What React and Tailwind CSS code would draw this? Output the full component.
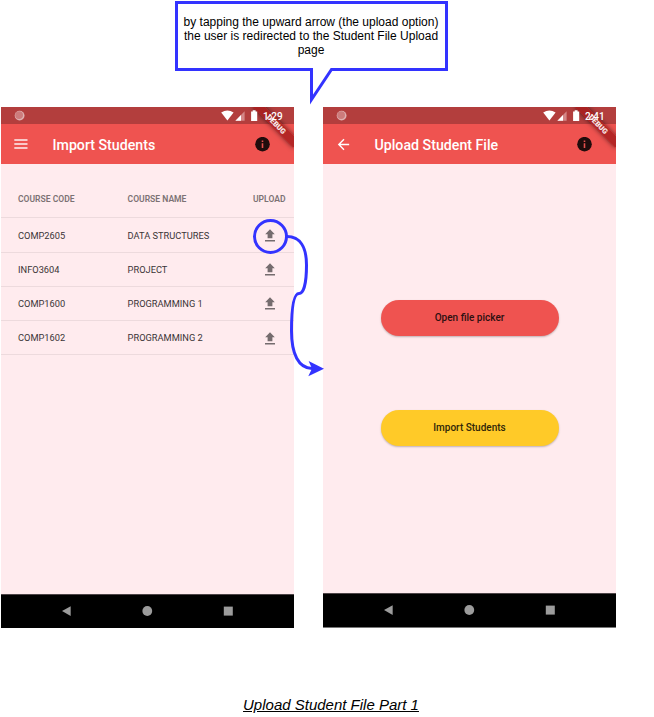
const courses = [
  ["COMP2605", "DATA STRUCTURES"],
  ["INFO3604", "PROJECT"],
  ["COMP1600", "PROGRAMMING 1"],
  ["COMP1602", "PROGRAMMING 2"],
];

function StatusBar({ time }) {
  return (
    <div className="relative z-20 flex h-[17px] shrink-0 items-center pl-[13px] pr-[11px] text-white">
      <svg className="size-[11px]" viewBox="0 0 11 11">
        <circle cx="5.6" cy="5.6" r="4.9" fill="#dfb0b0" />
        <circle cx="5.1" cy="5.1" r="3.9" fill="#cd7c7c" />
      </svg>
      <svg className="ml-auto h-[11px] w-[38px]" viewBox="0 0 38 11">
        <path d="M.2 2.6Q6.4-1.8 12.6 2.6L6.4 10.6Z" fill="#fff" />
        <path d="M14.4 10.7 23.6 1.2V10.7Z" fill="#d48787" />
        <path d="M14.4 10.7 20 5V10.7Z" fill="#fff" />
        <path d="M30.1 1.5h1.6V.3h2.9v1.2h1.6v9.4h-6.1Z" fill="#fff" />
      </svg>
      <span className="ml-[4px] w-[20px] whitespace-nowrap pt-[1px] text-[10px] font-medium leading-[17px]">{time}</span>
    </div>
  );
}

function DebugBanner() {
  return (
    <div className="pointer-events-none absolute inset-0 z-10 overflow-hidden">
      <div className="absolute -right-[11.4px] top-[12.9px] flex h-[8.5px] w-[57px] rotate-45 items-center justify-center bg-[#a51c1c]/80 text-[7.4px] font-black leading-none text-white/90 shadow-[0_0_5px_rgba(0,0,0,0.55)]">
        DEBUG
      </div>
    </div>
  );
}

function InfoIcon() {
  return (
    <svg className="size-[15px]" viewBox="0 0 15 15">
      <circle cx="7.5" cy="7.2" r="7.3" fill="#200c0c" />
      <path d="M6.7 3.4h1.6v1.6H6.7ZM6.7 6.3h1.6v4.7H6.7Z" fill="#e5504d" />
    </svg>
  );
}

function MenuIcon() {
  return (
    <svg className="h-[10px] w-[14px]" viewBox="0 0 14 10" fill="#fff" opacity="0.92">
      <path d="M.3.2h13.2v1.5H.3ZM.3 4.3h13.2v1.4H.3ZM.3 8.3h13.2v1.5H.3Z" />
    </svg>
  );
}

function BackIcon() {
  return (
    <svg className="size-[17px]" viewBox="0 0 24 24" fill="#fff">
      <path d="M20 11H7.83l5.59-5.59L12 4l-8 8 8 8 1.41-1.41L7.83 13H20v-2z" />
    </svg>
  );
}

function UploadIcon() {
  return (
    <svg className="h-[13px] w-[10px]" viewBox="0 0 10 13" fill="#756c6e">
      <path d="M5 .2 9.8 5.3H7.4V9.3H2.6V5.3H.2ZM0 10.9h10v1.5H0Z" />
    </svg>
  );
}

function NavBar({ className }) {
  return (
    <div className={`shrink-0 border-t border-[#4d4447] bg-black ${className}`}>
      <svg className="block h-[33px] w-[293px]" viewBox="0 0 293 33" fill="#9c9c9c">
        <path d="M61 16 69.7 11.2V20.9Z" />
        <circle cx="146.3" cy="16" r="4.9" />
        <path d="M222.8 11.6h9v9h-9Z" />
      </svg>
    </div>
  );
}

function Phone({ time, icon, title, navClass, children }) {
  return (
    <div className="relative flex h-[521px] w-[293px] flex-col overflow-hidden bg-[#ffebee]">
      <div className="absolute inset-x-0 top-0 h-[17px] bg-[#b33e3d]" />
      <StatusBar time={time} />
      <header className="flex h-[40px] shrink-0 items-center bg-[#ef5350] pr-[24px] text-white">
        <div className="flex w-[40px] items-center justify-center">{icon}</div>
        <h1 className="ml-[11.5px] pt-[3px] text-[14.2px] font-medium">{title}</h1>
        <div className="ml-auto">
          <InfoIcon />
        </div>
      </header>
      <DebugBanner />
      <main className="flex flex-1 flex-col">{children}</main>
      <NavBar className={navClass} />
    </div>
  );
}

function CourseTable() {
  return (
    <div className="pt-[14px]">
      <div className="flex h-[40.4px] items-center border-b border-[#eddadd] pl-[17px] pt-[3px] text-[8.56px] font-semibold text-[#7c7274]">
        <span className="w-[109.6px]">COURSE CODE</span>
        <span className="w-[125.4px]">COURSE NAME</span>
        <span>UPLOAD</span>
      </div>
      {courses.map(([code, name]) => (
        <div key={code} className="flex h-[34.2px] items-center border-b border-[#eddadd] pl-[17px] pt-[1.2px] text-[9.27px] text-[#3a3436]">
          <span className="w-[109.6px]">{code}</span>
          <span className="w-[137.4px]">{name}</span>
          <UploadIcon />
        </div>
      ))}
    </div>
  );
}

function Callout() {
  return (
    <div className="relative h-[107px]">
      <svg className="absolute inset-0 h-[107px] w-[654px]" viewBox="0 0 654 107">
        <path d="M176.5 2.5H446.5V69.5H331.5L311.5 99.5V69.5H176.5Z" fill="#fff" stroke="#3333ff" strokeWidth="3" />
      </svg>
      <p className="relative ml-[181px] w-[260px] pt-[15px] text-center font-['Liberation_Sans',sans-serif] text-[12px] leading-[14px] text-black">
        by tapping the upward arrow (the upload option) the user is redirected to the Student File Upload page
      </p>
    </div>
  );
}

function Connector() {
  return (
    <svg className="pointer-events-none absolute left-0 top-0 z-30 h-[717px] w-[654px]" viewBox="0 0 654 717" fill="none">
      <ellipse cx="270.5" cy="236.5" rx="16" ry="16" stroke="#3333ff" strokeWidth="3" />
      <path
        d="M287 236.5C300 236.5 306.5 247 306.5 265C306.5 284 303.5 293.5 299 293.5C293 293.5 291.5 312 291.5 331C291.5 354 298.5 368 312 368.5"
        stroke="#3333ff"
        strokeWidth="3"
      />
      <path d="M324 368.7 308.3 376.2 312 368.5 308.6 361Z" fill="#3333ff" />
    </svg>
  );
}

export default function App() {
  return (
    <div className="relative h-[717px] w-[654px] overflow-hidden bg-white font-[Roboto,sans-serif]">
      <Callout />
      <div className="flex gap-[29px] pl-[1px]">
        <Phone time="1:29" title="Import Students" icon={<MenuIcon />} navClass="h-[34px]">
          <CourseTable />
        </Phone>
        <Phone time="2:41" title="Upload Student File" icon={<BackIcon />} navClass="h-[35px] border-b border-b-[#777]">
          <div className="flex flex-col items-center gap-[74px] pt-[135.5px] text-[10px] font-medium">
            <button className="h-[36px] w-[178px] rounded-full bg-[#ef5350] text-[#2d1010] shadow-[0_1px_2px_rgba(0,0,0,0.25)]">
              Open file picker
            </button>
            <button className="h-[36px] w-[178px] rounded-full bg-[#ffca28] text-[#302608] shadow-[0_1px_2px_rgba(0,0,0,0.25)]">
              Import Students
            </button>
          </div>
        </Phone>
      </div>
      <p className="mt-[68px] pl-[8px] text-center font-['Liberation_Sans',sans-serif] text-[15px] italic leading-[17px] text-black underline">
        Upload Student File Part 1
      </p>
      <Connector />
    </div>
  );
}
